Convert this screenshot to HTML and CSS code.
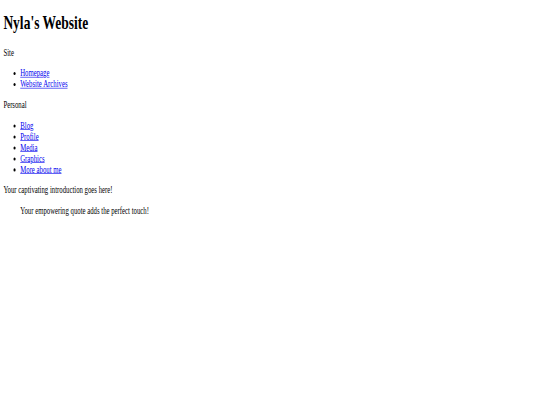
FILE: index.html
```html
<!DOCTYPE html>
<html>
<head>
<meta charset="utf-8">
<title>Nyla's Website</title>
<link rel="stylesheet" href="styles.css">
</head>
<body>
<div class="frame">
<div class="page">
  <h1 class="title">Nyla's Website</h1>
  <p class="label">Site</p>
  <ul class="menu">
    <li><a href="#">Homepage</a></li>
    <li><a href="#">Website Archives</a></li>
  </ul>
  <p class="label">Personal</p>
  <ul class="menu">
    <li><a href="#">Blog</a></li>
    <li><a href="#">Profile</a></li>
    <li><a href="#">Media</a></li>
    <li><a href="#">Graphics</a></li>
    <li><a href="#">More about me</a></li>
  </ul>
  <p class="intro">Your captivating introduction goes here!</p>
  <blockquote class="quote">Your empowering quote adds the perfect touch!</blockquote>
</div>
</div>
</body>
</html>
```

FILE: styles.css
```css
html, body {
  margin: 0;
  padding: 0;
  background: #ffffff;
}
.frame {
  width: 540px;
  height: 405px;
  overflow: hidden;
}
.page {
  display: flow-root;
  width: 1280px;
  padding: 0 8px;
  box-sizing: border-box;
  font-family: "Liberation Serif", "Times New Roman", serif;
  font-size: 16px;
  color: #000;
  transform: scale(0.421875, 0.61);
  transform-origin: 0 0;
}
.title {
  font-size: 32px;
  font-weight: bold;
  margin: 19px 0 21.44px;
}
.label, .intro {
  margin: 16px 0;
}
.menu {
  margin: 16px 0;
  padding-left: 40px;
}
.menu a {
  color: #0000ee;
}
.quote {
  margin: 16px 40px;
}
```
